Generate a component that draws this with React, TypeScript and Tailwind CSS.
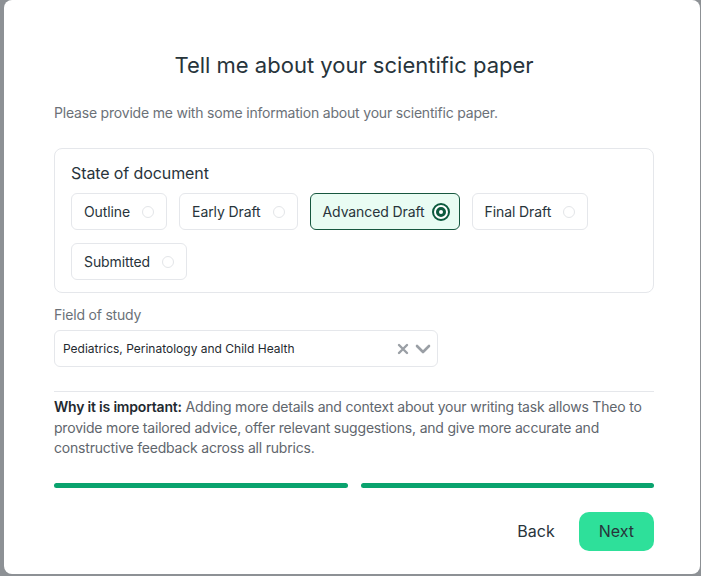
import React from "react";

const options = [
  { label: "Outline", selected: false },
  { label: "Early Draft", selected: false },
  { label: "Advanced Draft", selected: true },
  { label: "Final Draft", selected: false },
  { label: "Submitted", selected: false },
];

function Option({ label, selected }: { label: string; selected: boolean }) {
  return (
    <div
      className={
        selected
          ? "flex h-[37px] items-center gap-[7px] rounded-[6px] border border-[#17573f] bg-[#e9fcf3] pl-[12px] pr-[9px]"
          : "flex h-[37px] items-center gap-3 rounded-[6px] border border-[#e5e7eb] bg-white pl-[12px] pr-[12px]"
      }
    >
      <span className="text-[14px] leading-[20px] tracking-[-0.1px] text-[#28343b]">{label}</span>
      {selected ? (
        <span className="flex h-[18px] w-[18px] items-center justify-center rounded-full border-[2px] border-[#0c5a3e] bg-white">
          <span className="h-[10px] w-[10px] rounded-full border-[3px] border-[#0c5a3e] bg-white" />
        </span>
      ) : (
        <span className="h-[12px] w-[12px] rounded-full border border-[#e3e5e8] bg-white" />
      )}
    </div>
  );
}

export default function App() {
  return (
    <div
      className="flex h-[576px] w-[701px] bg-[#8d9195] pb-[2px] pl-[4px] pr-[1px]"
      style={{ fontFamily: "Inter, 'Noto Sans', sans-serif" }}
    >
      <div className="flex flex-1 flex-col rounded-[8px] bg-white pl-[50px] pr-[46px] pt-[51px]">
        <h1 className="text-center text-[22px] leading-[28px] font-normal text-[#27343b]">
          Tell me about your scientific paper
        </h1>
        <p className="mt-[24px] text-[14px] leading-[20px] tracking-[-0.2px] text-[#6b7178]">
          Please provide me with some information about your scientific paper.
        </p>

        <div className="mt-[25px] rounded-[8px] border border-[#e5e7eb] px-[16px] pb-[12px] pt-[12px]">
          <div className="text-[16px] leading-[24px] tracking-[-0.1px] text-[#28343b]">State of document</div>
          <div className="mt-[8px] flex flex-wrap gap-x-[12px] gap-y-[13px]">
            {options.map((o) => (
              <Option key={o.label} label={o.label} selected={o.selected} />
            ))}
          </div>
        </div>

        <div className="mt-[12px] text-[14px] leading-[20px] tracking-[-0.2px] text-[#6b7178]">Field of study</div>
        <div className="mt-[5px] flex h-[37px] w-[384px] items-center rounded-[6px] border border-[#e5e7eb] pl-[8px] pr-[6px]">
          <span className="flex-1 text-[12px] text-[#1f2a30]">
            Pediatrics, Perinatology and Child Health
          </span>
          <svg width="12" height="12" viewBox="0 0 12 12" className="mr-[6px]">
            <path d="M2 2 L10 10 M10 2 L2 10" stroke="#9a9fa5" strokeWidth="2.4" strokeLinecap="round" />
          </svg>
          <svg width="16" height="12" viewBox="0 0 16 12">
            <path d="M2 3 L8 9 L14 3" stroke="#9a9fa5" strokeWidth="2.6" fill="none" strokeLinecap="round" strokeLinejoin="round" />
          </svg>
        </div>

        <div className="mt-[24px] h-px bg-[#e5e7eb]" />
        <p className="mt-[5px] text-[14px] leading-[20.5px] tracking-[-0.2px] text-[#5f666d]">
          <span className="font-semibold text-[#1f2a30]">Why it is important:</span> Adding more details
          and context about your writing task allows Theo to provide more tailored advice, offer relevant
          suggestions, and give more accurate and constructive feedback across all rubrics.
        </p>

        <div className="mt-[24px] flex gap-[13px]">
          <div className="h-[5px] flex-1 rounded-full bg-[#0aa36e]" />
          <div className="h-[5px] flex-1 rounded-full bg-[#0aa36e]" />
        </div>

        <div className="mt-[24px] flex justify-end gap-[12px]">
          <button className="h-[39px] px-[12px] text-[16px] text-[#28343b]">Back</button>
          <button className="h-[39px] rounded-[10px] bg-[#2ee09a] px-[20px] text-[16px] text-[#28343b]">
            Next
          </button>
        </div>
      </div>
    </div>
  );
}
